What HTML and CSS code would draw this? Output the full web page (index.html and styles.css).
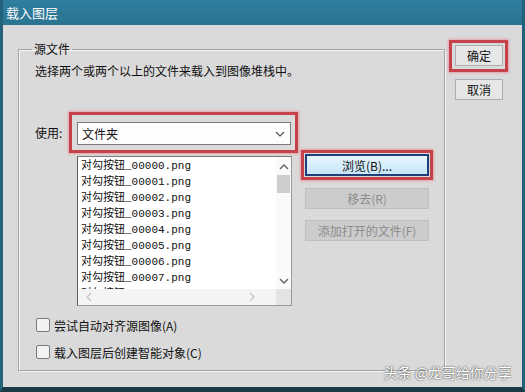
FILE: index.html
```html
<!DOCTYPE html>
<html>
<head>
    <title>载入图层</title>
    <link rel="stylesheet" href="styles.css">
</head>
<body>
    <div class="window">
        <div class="titlebar">载入图层</div>
        <div class="main">
            <fieldset class="group">
                <legend>源文件</legend>
                <p class="desc">选择两个或两个以上的文件来载入到图像堆栈中。</p>

                <div class="use-row">
                    <label class="use-label">使用:</label>
                    <div class="mark mark-select">
                        <div class="select">
                            <span>文件夹</span>
                            <svg width="10" height="6" viewBox="0 0 10 6"><polyline points="1,1 5,5 9,1" fill="none" stroke="#555" stroke-width="1.2"/></svg>
                        </div>
                    </div>
                </div>

                <div class="list-row">
                    <div class="listbox">
                        <div class="items" id="items"></div>
                        <div class="vscroll">
                            <svg width="10" height="6" viewBox="0 0 10 6"><polyline points="1,5 5,1 9,5" fill="none" stroke="#666" stroke-width="1.4"/></svg>
                            <div class="thumb"></div>
                            <div class="spacer"></div>
                            <svg width="10" height="6" viewBox="0 0 10 6"><polyline points="1,1 5,5 9,1" fill="none" stroke="#666" stroke-width="1.4"/></svg>
                        </div>
                        <div class="hscroll">
                            <svg width="6" height="10" viewBox="0 0 6 10"><polyline points="5,1 1,5 5,9" fill="none" stroke="#c4c4c4" stroke-width="1.2"/></svg>
                            <svg width="6" height="10" viewBox="0 0 6 10"><polyline points="1,1 5,5 1,9" fill="none" stroke="#c4c4c4" stroke-width="1.2"/></svg>
                        </div>
                        <div class="corner"></div>
                    </div>

                    <div class="side-buttons">
                        <div class="mark mark-browse">
                            <button class="btn btn-focus">浏览(B)...</button>
                        </div>
                        <button class="btn btn-off">移去(R)</button>
                        <button class="btn btn-off btn-add">添加打开的文件(F)</button>
                    </div>
                </div>

                <label class="check"><span class="box"></span>尝试自动对齐源图像(A)</label>
                <label class="check"><span class="box"></span>载入图层后创建智能对象(C)</label>
            </fieldset>

            <div class="dialog-buttons">
                <div class="mark mark-ok">
                    <button class="btn btn-small">确定</button>
                </div>
                <button class="btn btn-small btn-cancel">取消</button>
            </div>
        </div>
        <div class="watermark">头条 @龙哥给你分享</div>
    </div>

    <script>
        const items = document.getElementById("items");
        for (let i = 0; i < 9; i++) {
            const row = document.createElement("div");
            row.className = "item";
            row.innerText = "对勾按钮_0000" + i + ".png";
            items.appendChild(row);
        }
    </script>
</body>
</html>
```

FILE: styles.css
```css
body { margin: 0; font-family: "Noto Sans CJK SC", "Noto Sans", sans-serif; font-size: 12px; color: #111; }
.window { position: relative; width: 525px; height: 392px; box-sizing: border-box; background: #dadada; border-left: 3px solid #22627b; border-right: 3px solid #22627b; border-bottom: 5px solid #1d3b46; }
.titlebar { height: 25px; line-height: 25px; padding-left: 3px; color: #fff; font-size: 13px; background: linear-gradient(#2f7f9f, #2a7391); }

.main { display: flex; align-items: flex-start; padding: 15px 0 0 15px; }

.group { margin: 2px 0 0 0; width: 427px; box-sizing: border-box; padding: 7px 0 10px 16px; border: 1px solid #a3a3a3; box-shadow: inset 1px 1px 0 #f6f6f6, 1px 1px 0 #f6f6f6; }
.group legend { margin-left: -3px; padding: 0 2px; line-height: 14px; font-size: 12px; }
.desc { margin: 0; line-height: 16px; }

.use-row { display: flex; align-items: center; margin-top: 33px; }
.use-label { width: 34px; }

.mark { border: 3px solid #c5424b; box-shadow: 0 0 2px 1px rgba(235, 140, 150, 0.7); }
.mark-select { padding: 7px 4px 5px 5px; }
.select { display: flex; align-items: center; justify-content: space-between; width: 214px; height: 23px; box-sizing: border-box; padding: 0 5px 0 4px; background: #fdfdfd; border: 1px solid #7c7c7c; font-size: 12px; }

.list-row { display: flex; align-items: flex-start; margin-top: -3px; }
.listbox { display: grid; grid-template-columns: 1fr 15px; grid-template-rows: 1fr 16px; width: 215px; height: 150px; margin: 6px 0 0 42px; box-sizing: border-box; background: #fff; border: 1px solid #9a9a9a; border-left-color: #5e5e5e; border-top-color: #7a7a7a; }
.items { overflow: hidden; padding: 1px 0 0 3px; }
.item { height: 16px; line-height: 16px; font-family: "Liberation Mono", "Noto Sans CJK SC", monospace; font-size: 11px; white-space: nowrap; }
.vscroll { display: flex; flex-direction: column; align-items: center; padding: 7px 0 5px; background: #fafafa; }
.vscroll .thumb { width: 13px; height: 18px; margin-top: 5px; background: #cdcdcd; }
.vscroll .spacer { flex: 1; }
.hscroll { display: flex; align-items: center; justify-content: space-between; padding: 0 21px 0 8px; background: #f4f4f4; }
.corner { background: #e4e4e4; }

.side-buttons { display: flex; flex-direction: column; align-items: flex-start; margin-left: 9px; }
.mark-browse { padding: 1px; }
.btn { font-family: "Noto Sans CJK SC", sans-serif; font-size: 12px; padding: 0; background: #e1e1e1; border: 1px solid #adadad; color: #111; }
.btn-focus { width: 124px; height: 22px; background: linear-gradient(#e8f5fc, #c6e6f8); border: 2px solid #1f3f7a; }
.btn-off { width: 124px; height: 21px; margin: 8px 0 0 4px; color: #8c8c8c; background: #cccccc; border-color: #bfbfbf; }
.btn-add { margin-top: 11px; }

.check { display: flex; align-items: center; height: 16px; margin-top: 11px; }
.box { width: 14px; height: 14px; box-sizing: border-box; margin: 0 4px 0 1px; border: 1px solid #7a7a7a; border-radius: 2px; background: #f2f2f2; }

.dialog-buttons { display: flex; flex-direction: column; align-items: flex-start; margin-left: 4px; }
.mark-ok { padding: 2px 2px 3px 3px; }
.btn-small { width: 48px; height: 21px; background: #e6e6e6; }
.btn-cancel { margin: 7px 0 0 6px; }

.watermark { position: absolute; right: 10px; bottom: 5px; font-size: 14px; color: #fff; text-shadow: 0 0 2px #555, 0 0 1px #555; }
```
